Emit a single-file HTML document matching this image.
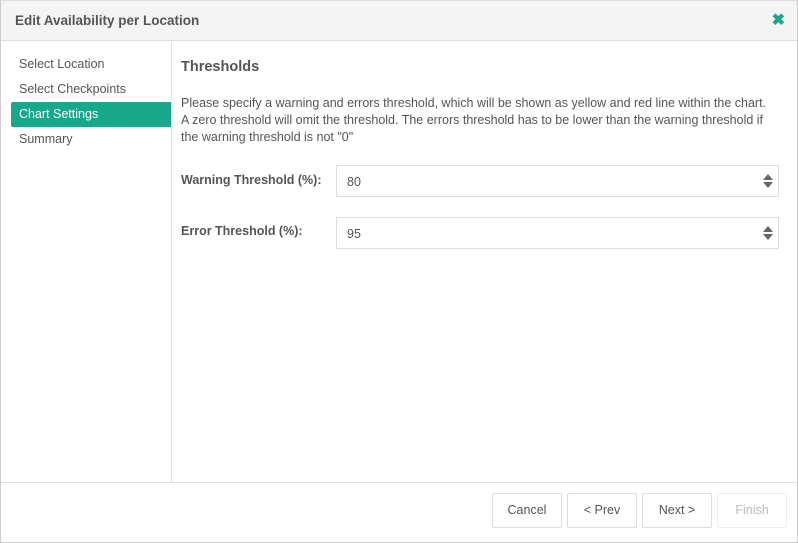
<!DOCTYPE html>
<html><head><style>
*{box-sizing:border-box;margin:0;padding:0}
body{width:798px;height:543px;background:#fff;font-family:"Liberation Sans",sans-serif;font-size:12.5px;color:#555;position:relative;overflow:hidden}
.frame{position:absolute;left:0;top:0;width:798px;height:543px;border:1px solid #ccc;border-top-color:#ddd}
.hdr{position:absolute;left:1px;top:1px;width:796px;height:40px;background:#f4f4f4;border-bottom:1px solid #ddd}
.hdr h1{position:absolute;left:14px;top:12px;font-size:13.5px;font-weight:bold;color:#555}
.x{position:absolute;right:12px;top:9px;color:#17a88b;font-size:16px;font-weight:bold}
.side{position:absolute;left:1px;top:42px;width:171px;height:440px;border-right:1px solid #ddd}
.item{position:absolute;left:10px;width:160px;height:25px;line-height:25px;padding-left:8px;color:#555}
.act{background:#17a88b;color:#fff;border-radius:2px 0 0 2px}
h2{position:absolute;left:181px;top:59px;font-size:14.5px;font-weight:bold;color:#555}
.p{position:absolute;left:181px;top:95px;width:615px;line-height:17px;font-size:12.5px;white-space:nowrap}
.lbl{position:absolute;left:181px;font-weight:bold;font-size:12.5px}
.inp{position:absolute;left:336px;width:443px;height:32px;border:1px solid #ddd;padding:9px 10px;font-size:12.5px;color:#555}
.sp{position:absolute;right:5px;top:8px;width:10px}
.sp i{display:block;width:0;height:0;border-left:5px solid transparent;border-right:5px solid transparent}
.up{border-bottom:6px solid #666;margin-bottom:2px}
.dn{border-top:6px solid #666}
.foot{position:absolute;left:1px;top:482px;width:796px;height:60px;border-top:1px solid #ddd}
.btn{position:absolute;top:493px;height:35px;width:70px;border:1px solid #ddd;border-radius:2px;text-align:center;line-height:33px;font-size:12.5px;color:#555;background:#fff}
</style></head><body>
<div class="frame"></div>
<div class="hdr"><h1>Edit Availability per Location</h1><div class="x">✖</div></div>
<div class="side">
<div class="item" style="top:10px">Select Location</div>
<div class="item" style="top:35px">Select Checkpoints</div>
<div class="item act" style="top:60px">Chart Settings</div>
<div class="item" style="top:85px">Summary</div>
</div>
<h2>Thresholds</h2>
<div class="p">Please specify a warning and errors threshold, which will be shown as yellow and red line within the chart.<br>A zero threshold will omit the threshold. The errors threshold has to be lower than the warning threshold if<br>the warning threshold is not "0"</div>
<div class="lbl" style="top:173px">Warning Threshold (%):</div>
<div class="inp" style="top:165px">80<div class="sp"><i class="up"></i><i class="dn"></i></div></div>
<div class="lbl" style="top:224px">Error Threshold (%):</div>
<div class="inp" style="top:217px">95<div class="sp"><i class="up"></i><i class="dn"></i></div></div>
<div class="foot"></div>
<div class="btn" style="left:492px">Cancel</div>
<div class="btn" style="left:567px">&lt; Prev</div>
<div class="btn" style="left:642px">Next &gt;</div>
<div class="btn" style="left:717px;color:#bbb;border-color:#eee">Finish</div>
</body></html>
